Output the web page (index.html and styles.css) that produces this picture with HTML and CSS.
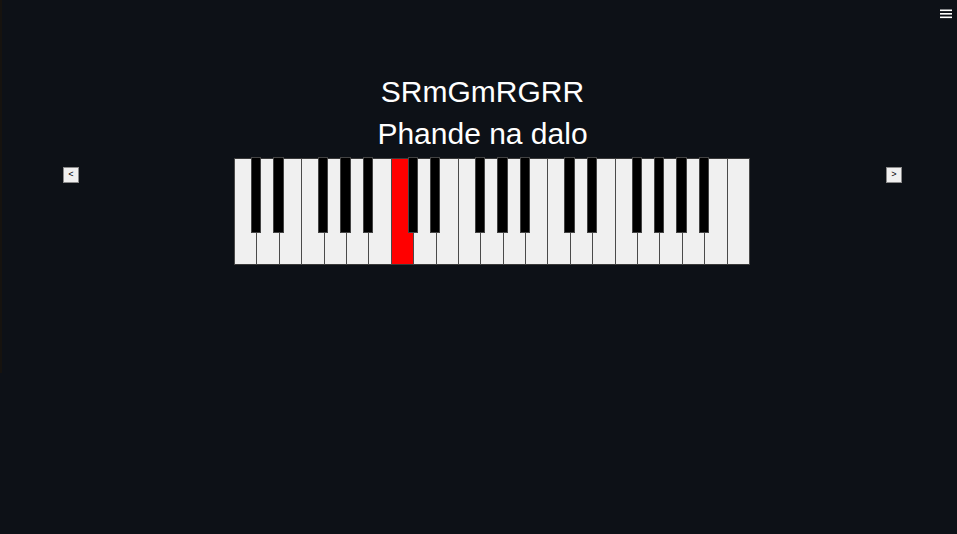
FILE: index.html
```html
<!DOCTYPE html>
<html lang="en">
<head>
<meta charset="utf-8">
<title>SRmGmRGRR</title>
<link rel="stylesheet" href="styles.css">
</head>
<body>
<div class="edge"></div>
<button class="menu" aria-label="Menu">
  <svg width="12" height="10" viewBox="0 0 12 10"><rect x="0" y="0.5" width="12" height="1.6" fill="#ffffff"/><rect x="0" y="4" width="12" height="1.6" fill="#ffffff"/><rect x="0" y="7.5" width="12" height="1.6" fill="#ffffff"/></svg>
</button>
<main class="page">
  <div class="title">SRmGmRGRR</div>
  <div class="title">Phande na dalo</div>
  <div class="row">
    <button class="nav">&lt;</button>
    <div class="keyboard">
      <div class="white"><span class="black"></span></div>
      <div class="white"><span class="black"></span></div>
      <div class="white"></div>
      <div class="white"><span class="black"></span></div>
      <div class="white"><span class="black"></span></div>
      <div class="white"><span class="black"></span></div>
      <div class="white"></div>
      <div class="white active"><span class="black"></span></div>
      <div class="white"><span class="black"></span></div>
      <div class="white"></div>
      <div class="white"><span class="black"></span></div>
      <div class="white"><span class="black"></span></div>
      <div class="white"><span class="black"></span></div>
      <div class="white"></div>
      <div class="white"><span class="black"></span></div>
      <div class="white"><span class="black"></span></div>
      <div class="white"></div>
      <div class="white"><span class="black"></span></div>
      <div class="white"><span class="black"></span></div>
      <div class="white"><span class="black"></span></div>
      <div class="white"><span class="black"></span></div>
      <div class="white"></div>
      <div class="white last"></div>
    </div>
    <button class="nav">&gt;</button>
  </div>
</main>
</body>
</html>
```
FILE: styles.css
```css
html, body {
  margin: 0;
  padding: 0;
  background: #0d1117;
  height: 100%;
}

body {
  font-family: "Liberation Sans", Arial, sans-serif;
  color: #ffffff;
  position: relative;
  overflow: hidden;
}

.edge {
  position: absolute;
  left: 0;
  top: 0;
  width: 2px;
  height: 373px;
  background: #16130f;
}

.menu {
  position: absolute;
  top: 9px;
  right: 5px;
  padding: 0;
  margin: 0;
  border: 0;
  background: transparent;
  width: 12px;
  height: 10px;
  display: block;
}

.menu svg {
  display: block;
}

.page {
  padding: 71px 55px 0 63px;
}

.title {
  font-size: 30px;
  line-height: 42px;
  text-align: center;
}

.row {
  display: flex;
  align-items: flex-start;
  margin-top: 3px;
}

.nav {
  width: 16px;
  height: 16px;
  margin: 9px 0 0 0;
  padding: 0;
  border: 1px solid #8a8a8a;
  background: #f0f0f0;
  color: #000000;
  font-family: "Liberation Mono", monospace;
  font-size: 9px;
  line-height: 14px;
  text-align: center;
}

.keyboard {
  display: flex;
  width: 516px;
  height: 107px;
  margin-left: 155px;
  margin-right: 136px;
}

.white {
  flex: 1 1 0;
  position: relative;
  background: #f0f0f0;
  border-left: 1px solid #4a4a4a;
  border-top: 1px solid #3a3a3a;
  border-bottom: 1px solid #3a3a3a;
}

.white.last {
  border-right: 1px solid #4a4a4a;
}

.white.active {
  background: #ff0000;
}

.black {
  position: absolute;
  z-index: 2;
  top: -2px;
  left: calc(100% - 5.5px);
  width: 10.4px;
  height: 76px;
  box-sizing: border-box;
  background: #000000;
  border: 1px solid #444444;
}
```
